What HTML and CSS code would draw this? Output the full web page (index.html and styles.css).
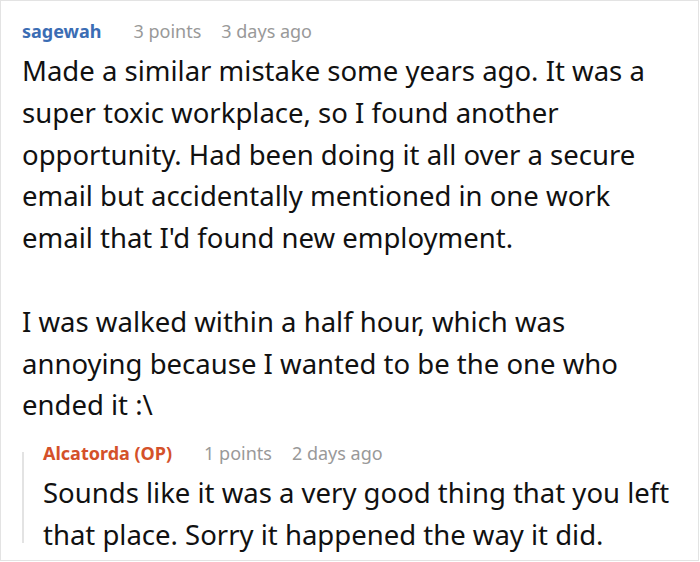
FILE: index.html
```html
<!DOCTYPE html>
<html lang="en">
<head>
<meta charset="utf-8">
<link rel="stylesheet" href="styles.css">
</head>
<body>
<div class="frame">
  <div class="comment">
    <div class="meta">
      <span class="author">sagewah</span>
      <span class="info">3 points</span>
      <span class="info">3 days ago</span>
    </div>
    <p class="text">Made a similar mistake some years ago. It was a super toxic workplace, so I found another opportunity. Had been doing it all over a secure email but accidentally mentioned in one work email that I'd found new employment.</p>
    <p class="text gap">I was walked within a half hour, which was annoying because I wanted to be the one who ended it :\</p>
    <div class="reply">
      <div class="meta">
        <span class="author op">Alcatorda (OP)</span>
        <span class="info">1 points</span>
        <span class="info">2 days ago</span>
      </div>
      <p class="text">Sounds like it was a very good thing that you left that place. Sorry it happened the way it did.</p>
    </div>
  </div>
</div>
</body>
</html>
```
FILE: styles.css
```css
html, body {
  margin: 0;
  padding: 0;
  background: #fff;
}
.frame {
  width: 699px;
  height: 561px;
  box-sizing: border-box;
  border: 1px solid #e3e3e3;
  overflow: hidden;
  font-family: "Noto Sans", "Open Sans", sans-serif;
}
.comment {
  padding: 17px 18px 0 21px;
}
.meta {
  display: flex;
  gap: 0 20px;
  align-items: baseline;
  font-size: 18px;
  line-height: 26px;
  margin-bottom: 6px;
}
.author {
  font-weight: 700;
  color: #3b6db4;
  margin-right: 12px;
}
.author.op {
  color: #d4512a;
}
.info {
  color: #999;
}
.text {
  margin: 0;
  font-size: 27.5px;
  line-height: 41.8px;
  color: #111;
}
.gap {
  margin-top: 41.8px;
}
.reply {
  position: relative;
  margin-top: 14px;
  padding-left: 21px;
}
.reply::before {
  content: "";
  position: absolute;
  left: 0;
  top: 12px;
  width: 2px;
  height: 91px;
  background: #e3e3e3;
}
```
